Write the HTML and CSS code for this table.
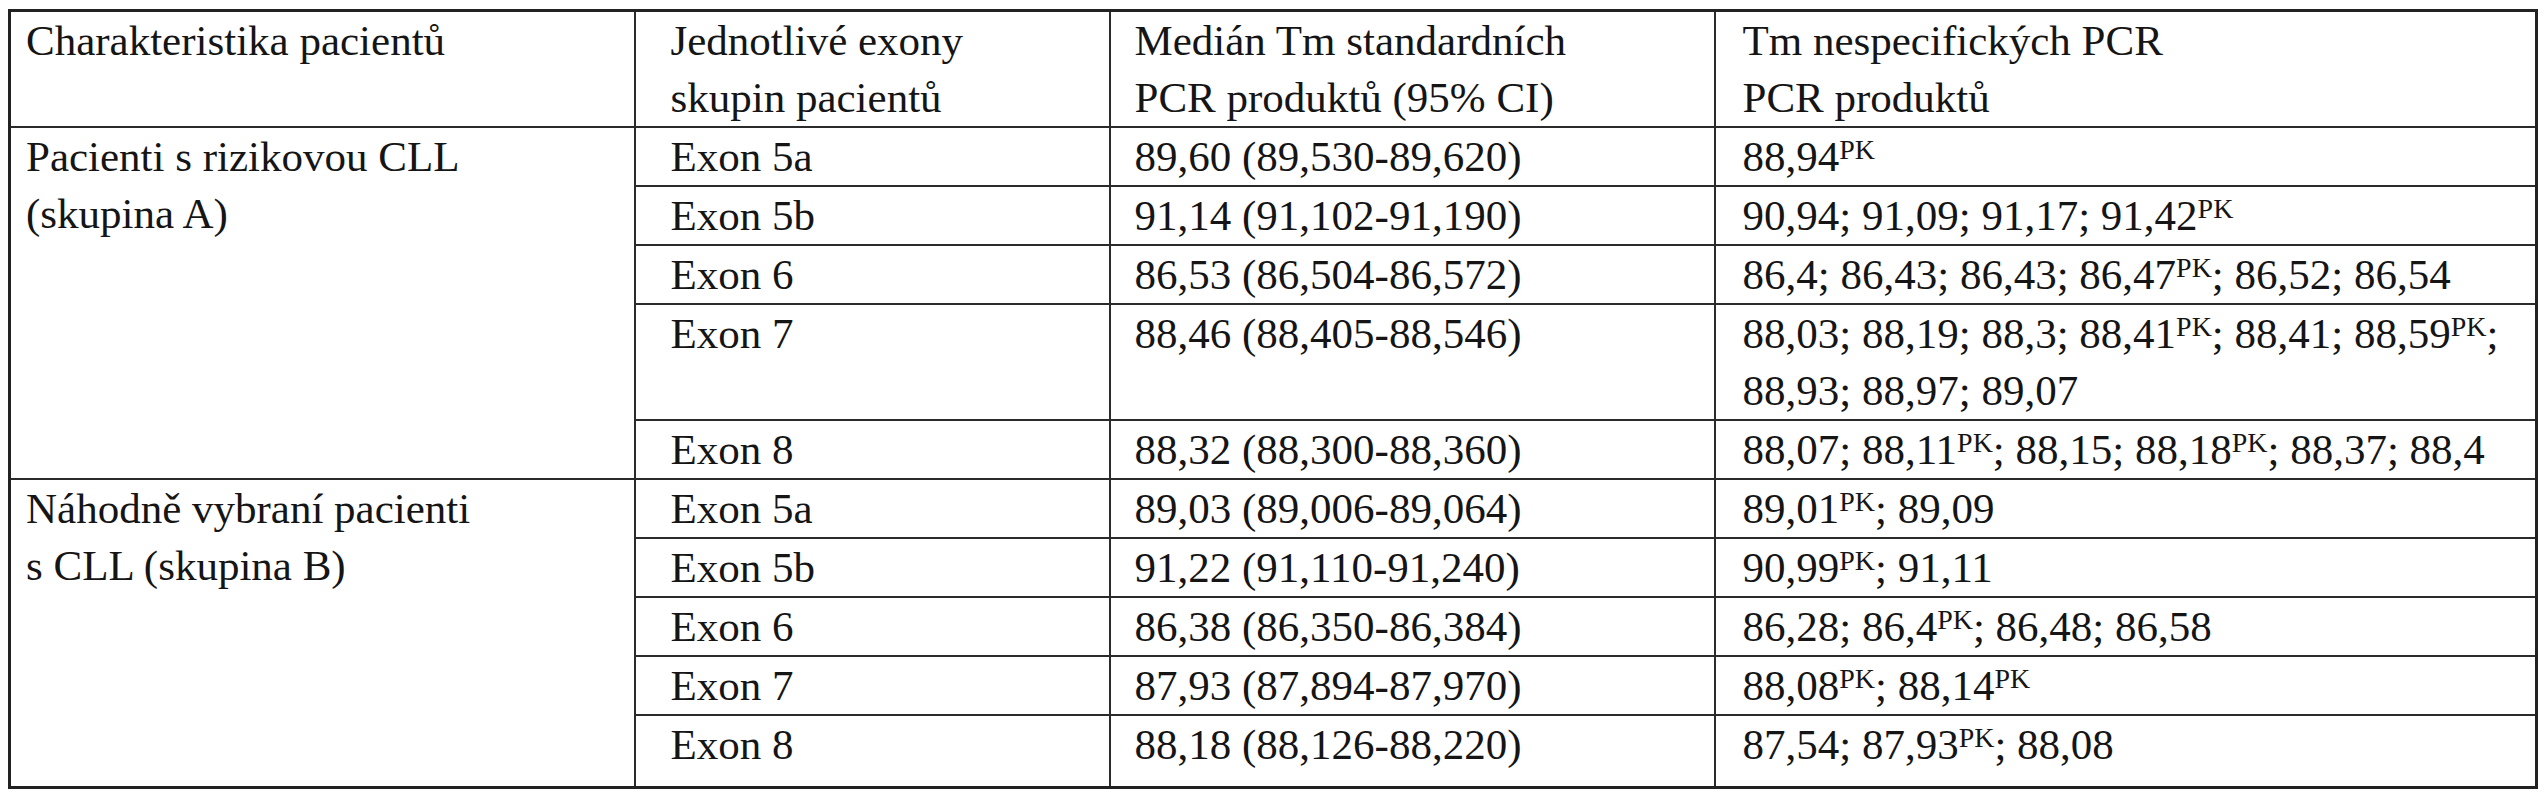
FILE: index.html
```html
<!DOCTYPE html>
<html lang="cs">
<head>
<meta charset="utf-8">
<title>Tm PCR produktů</title>
<link rel="stylesheet" href="styles.css">
</head>
<body>
<table class="tm-table">
  <colgroup>
    <col class="c1">
    <col class="c2">
    <col class="c3">
    <col class="c4">
  </colgroup>
  <thead>
    <tr>
      <th class="p1">Charakteristika pacientů</th>
      <th class="p2">Jednotlivé exony<br>skupin pacientů</th>
      <th class="p3">Medián Tm standardních<br>PCR produktů (95% CI)</th>
      <th class="p4">Tm nespecifických PCR<br>PCR produktů</th>
    </tr>
  </thead>
  <tbody>
    <tr>
      <td class="p1" rowspan="5">Pacienti s rizikovou CLL<br>(skupina A)</td>
      <td class="p2">Exon 5a</td>
      <td class="p3">89,60 (89,530-89,620)</td>
      <td class="p4">88,94<sup>PK</sup></td>
    </tr>
    <tr>
      <td class="p2">Exon 5b</td>
      <td class="p3">91,14 (91,102-91,190)</td>
      <td class="p4">90,94; 91,09; 91,17; 91,42<sup>PK</sup></td>
    </tr>
    <tr>
      <td class="p2">Exon 6</td>
      <td class="p3">86,53 (86,504-86,572)</td>
      <td class="p4">86,4; 86,43; 86,43; 86,47<sup>PK</sup>; 86,52; 86,54</td>
    </tr>
    <tr>
      <td class="p2">Exon 7</td>
      <td class="p3">88,46 (88,405-88,546)</td>
      <td class="p4">88,03; 88,19; 88,3; 88,41<sup>PK</sup>; 88,41; 88,59<sup>PK</sup>;<br>88,93; 88,97; 89,07</td>
    </tr>
    <tr>
      <td class="p2">Exon 8</td>
      <td class="p3">88,32 (88,300-88,360)</td>
      <td class="p4">88,07; 88,11<sup>PK</sup>; 88,15; 88,18<sup>PK</sup>; 88,37; 88,4</td>
    </tr>
    <tr>
      <td class="p1" rowspan="5">Náhodně vybraní pacienti<br>s CLL (skupina B)</td>
      <td class="p2">Exon 5a</td>
      <td class="p3">89,03 (89,006-89,064)</td>
      <td class="p4">89,01<sup>PK</sup>; 89,09</td>
    </tr>
    <tr>
      <td class="p2">Exon 5b</td>
      <td class="p3">91,22 (91,110-91,240)</td>
      <td class="p4">90,99<sup>PK</sup>; 91,11</td>
    </tr>
    <tr>
      <td class="p2">Exon 6</td>
      <td class="p3">86,38 (86,350-86,384)</td>
      <td class="p4">86,28; 86,4<sup>PK</sup>; 86,48; 86,58</td>
    </tr>
    <tr>
      <td class="p2">Exon 7</td>
      <td class="p3">87,93 (87,894-87,970)</td>
      <td class="p4">88,08<sup>PK</sup>; 88,14<sup>PK</sup></td>
    </tr>
    <tr class="last">
      <td class="p2">Exon 8</td>
      <td class="p3">88,18 (88,126-88,220)</td>
      <td class="p4">87,54; 87,93<sup>PK</sup>; 88,08</td>
    </tr>
  </tbody>
</table>
</body>
</html>
```
FILE: styles.css
```css
html, body {
  background: #ffffff;
}
body {
  margin: 9px 0 0 8px;
  font-family: "Liberation Serif", serif;
  font-size: 43px;
  color: #151515;
}
.tm-table {
  border-collapse: collapse;
  table-layout: fixed;
  width: 2527px;
  border: 3px solid #222222;
  font-family: "Liberation Serif", serif;
  font-size: 43px;
}
.c1 { width: 625px; }
.c2 { width: 475px; }
.c3 { width: 605px; }
.c4 { width: 822px; }
.tm-table th,
.tm-table td {
  border: 2px solid #2b2b2b;
  padding: 0;
  line-height: 57px;
  text-align: left;
  vertical-align: top;
  font-weight: 400;
  white-space: nowrap;
}
.tm-table .p1 { padding-left: 15px; }
.tm-table .p2 { padding-left: 35px; }
.tm-table .p3 { padding-left: 24px; }
.tm-table .p4 { padding-left: 27px; }
.tm-table tr.last td { padding-bottom: 13px; }
.tm-table sup {
  font-size: 0.65em;
  line-height: 0;
  vertical-align: 0.42em;
}
```
